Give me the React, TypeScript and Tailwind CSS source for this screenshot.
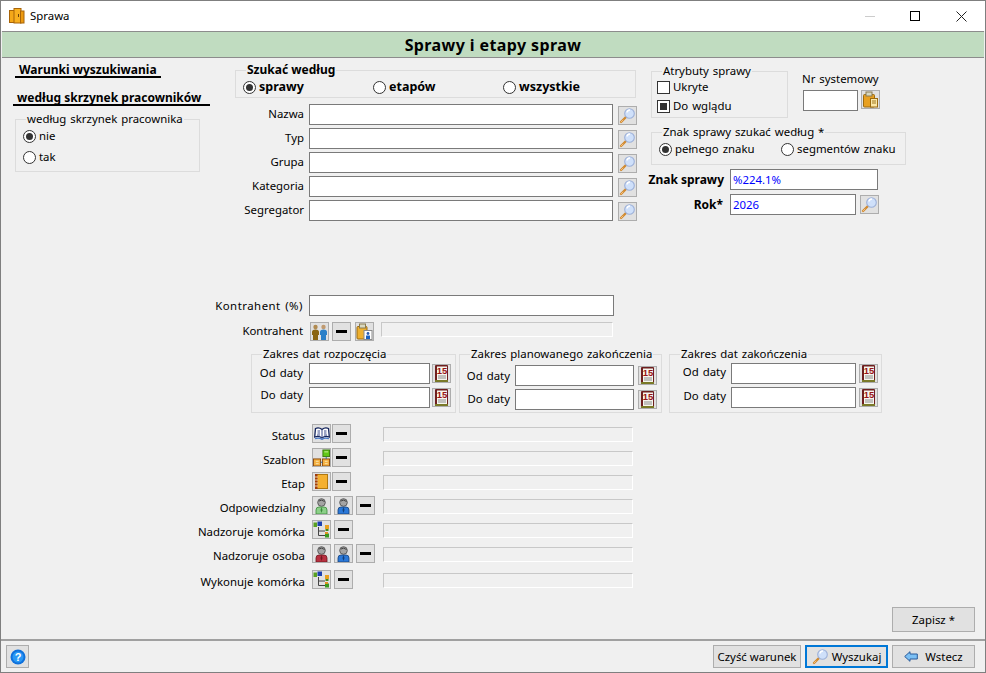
import React from "react";

const Lens = () => (
  <svg width="17" height="17" viewBox="0 0 17 17">
    <path d="M2 15 L7 10" stroke="#d08a30" strokeWidth="2.4" strokeLinecap="round" />
    <path d="M2 15 L4 13" stroke="#f4c080" strokeWidth="1" strokeLinecap="round" />
    <circle cx="10.5" cy="6.5" r="4.8" fill="#cfe0fa" stroke="#9db0d8" strokeWidth="1.1" />
    <path d="M8 5.5 A3 3 0 0 1 11 3" stroke="#fff" strokeWidth="1.5" fill="none" />
  </svg>
);
const Minus = () => <span className="block w-[11px] h-[3px] bg-black" />;
const Clip = () => (
  <svg width="17" height="17" viewBox="0 0 17 17">
    <rect x="1.5" y="3.5" width="11" height="12.5" rx="1" fill="#e8a020" stroke="#9a6a10" />
    <rect x="4" y="1" width="6" height="4" fill="#d8d8c0" stroke="#8a7a50" />
    <rect x="8.5" y="7.5" width="7" height="8.5" fill="#fbe8a8" stroke="#9a6a10" />
    <path d="M10 10h4M10 12h4" stroke="#a07820" />
  </svg>
);
const ClipPeople = () => (
  <svg width="17" height="17" viewBox="0 0 17 17">
    <rect x="1" y="3.5" width="10" height="12.5" rx="1" fill="#eeb030" stroke="#9a6a10" />
    <rect x="3.5" y="1" width="6" height="4" fill="#d8d8c0" stroke="#8a7a50" />
    <rect x="8" y="7.5" width="8" height="9" fill="#fff" stroke="#8a8a8a" />
    <circle cx="12" cy="10.5" r="1.4" fill="#2a5ab0" />
    <path d="M10 16v-3.5h4V16z" fill="#1a60c0" />
  </svg>
);
const People = () => (
  <svg width="17" height="18" viewBox="0 0 17 18">
    <circle cx="4.5" cy="4" r="2.2" fill="#b08a50" />
    <path d="M1 9 Q1 6.5 4.5 6.5 Q8 6.5 8 9 V12 H7 V17 H2 V12 H1 Z" fill="#8a6410" />
    <circle cx="12.5" cy="4" r="2.2" fill="#c09a70" />
    <path d="M9 9 Q9 6.5 12.5 6.5 Q16 6.5 16 9 V12 H15 V17 H10 V12 H9 Z" fill="#2a80c8" />
  </svg>
);
const Calendar = () => (
  <svg width="13" height="17" viewBox="0 0 13 17">
    <rect x="0" y="0" width="13" height="17" rx="1" fill="#6e1f1f" />
    <path d="M0 15h13v2H0z" fill="#7a7a28" />
    <rect x="2" y="1.5" width="10" height="13.5" fill="#f6f6ee" />
    <text x="7" y="8.8" textAnchor="middle" fontSize="9.5" fontWeight="700" fontFamily="Liberation Sans, sans-serif" fill="#981414">15</text>
    <path d="M3 11h8M3 13h8" stroke="#8c8c8c" />
  </svg>
);
const BookOpen = () => (
  <svg width="16" height="13" viewBox="0 0 16 13">
    <path d="M8 2.5 Q5 0 1.5 1.5 L0.7 10 Q5 8.5 8 11 Q11 8.5 15.3 10 L14.5 1.5 Q11 0 8 2.5Z" fill="#fff" stroke="#14245c" strokeWidth="1.3" />
    <path d="M8 2.5V11M3.5 4h2.5M3.5 6h2.5M3 8h3M10 4h2.5M10 6h2.5M10 8h3" stroke="#3a4a8a" />
    <path d="M1 11.8 Q5 10.4 8 12.4 Q11 10.4 15 11.8" stroke="#4a7ac8" fill="none" strokeWidth="1.2" />
  </svg>
);
const Template = () => (
  <svg width="18" height="18" viewBox="0 0 18 18">
    <rect x="10.5" y="0.5" width="7" height="7" fill="#60c818" stroke="#3a7a10" />
    <path d="M12 2.5h4" stroke="#d0f0a0" />
    <rect x="0.5" y="10" width="7.5" height="7.5" fill="#f4b040" stroke="#8a4a10" />
    <rect x="10" y="10" width="7.5" height="7.5" fill="#f4b040" stroke="#8a4a10" />
    <path d="M3 12.5h3M3 15h3M12.5 12.5h3M12.5 15h3" stroke="#fbe4b0" />
    <path d="M8 13.5h2M14 8v2" stroke="#2a6a9a" />
  </svg>
);
const Notebook = () => (
  <svg width="13" height="15" viewBox="0 0 13 15">
    <rect x="1.5" y="0.5" width="11" height="14" fill="#f4b030" stroke="#b07810" />
    <rect x="0" y="0" width="2.5" height="15" fill="#a03c10" />
    <path d="M0 3h3M0 6h3M0 9h3M0 12h3" stroke="#e8d0a0" />
  </svg>
);
const Person = ({ body, dark }: { body: string; dark: string }) => (
  <svg width="13" height="16" viewBox="0 0 13 16">
    <circle cx="6.5" cy="4.5" r="3.8" fill="#a4a4a4" stroke="#5c5c5c" />
    <path d="M4 3 Q6.5 1 9.5 3.5" stroke="#444" fill="none" />
    <path d="M1 16 V12 Q1 9 4 9 H9 Q12 9 12 12 V16 Z" fill={body} stroke={dark} strokeWidth="0.8" />
    <path d="M6.5 9 L5.5 12 L6.5 15 L7.5 12 Z" fill={dark} />
  </svg>
);
const Tree = () => (
  <svg width="17" height="17" viewBox="0 0 17 17">
    <path d="M5.5 6V14.5H12M5.5 10H12" stroke="#444" fill="none" />
    <rect x="0.5" y="1.5" width="3.5" height="4.5" fill="#58a020" />
    <rect x="4.5" y="0.5" width="4.5" height="4.5" fill="#1a40b0" />
    <rect x="12" y="4" width="4" height="4" fill="#e8a020" />
    <rect x="12.5" y="8" width="3" height="2" fill="#3a8a20" />
    <rect x="12" y="12.5" width="4" height="4" fill="#3a9a20" />
    <rect x="12" y="11" width="3" height="2" fill="#e09020" />
  </svg>
);
const ArrowLeft = () => (
  <svg width="14" height="11" viewBox="0 0 14 11">
    <path d="M0.7 5.5 L6 0.7 V3 H13.3 V8 H6 V10.3 Z" fill="#7cc0f4" stroke="#2a5a9a" />
  </svg>
);
const Help = () => (
  <svg width="16" height="16" viewBox="0 0 16 16">
    <circle cx="8" cy="8" r="7.5" fill="#0e70dc" />
    <circle cx="8" cy="8" r="5.5" fill="#2a98f4" />
    <text x="8" y="12" textAnchor="middle" fontSize="11" fontWeight="700" fontFamily="Liberation Sans, sans-serif" fill="#fff">?</text>
  </svg>
);
const AppIcon = () => (
  <svg width="16" height="16" viewBox="0 0 16 16">
    <rect x="0.5" y="2.5" width="5" height="12" fill="#f4a818" stroke="#a86408" />
    <rect x="5" y="0.5" width="7" height="14.5" fill="#f8b020" stroke="#a86408" />
    <rect x="11.5" y="3" width="3.5" height="12" fill="#ec9a10" stroke="#a86408" />
    <path d="M9.5 6v3" stroke="#6a4008" />
  </svg>
);

const IconButton = ({ children, className = "" }: { children: React.ReactNode; className?: string }) => (
  <button type="button" className={`flex items-center justify-center w-[19px] h-[19px] shrink-0 border border-[#adadad] bg-[#e1e1e1] overflow-hidden ${className}`}>
    {children}
  </button>
);
const TextBox = ({ className = "", value = "" }: { className?: string; value?: string }) => (
  <input readOnly value={value} className={`block h-[21px] border border-[#7a7a7a] bg-white px-[2px] text-[#0000ff] outline-none ${className}`} />
);
const Radio = ({ on = false }: { on?: boolean }) => (
  <span className="flex items-center justify-center w-[13px] h-[13px] shrink-0 rounded-full border border-[#333] bg-white">
    {on && <span className="block w-[7px] h-[7px] rounded-full bg-[#333]" />}
  </span>
);
const Check = ({ on = false }: { on?: boolean }) => (
  <span className="flex items-center justify-center w-[13px] h-[13px] shrink-0 border border-[#333] bg-white">
    {on && <span className="block w-[7px] h-[7px] bg-[#333]" />}
  </span>
);
const Group = ({ legend, className = "", bold = false, children }: { legend: string; className?: string; bold?: boolean; children: React.ReactNode }) => (
  <fieldset className={`border border-[#dcdcdc] ${className}`}>
    <legend className={`ml-[10px] px-[1px] h-[14px] leading-[14px] whitespace-nowrap ${bold ? "font-bold text-[12px] [word-spacing:0]" : ""}`}>{legend}</legend>
    {children}
  </fieldset>
);
const SearchRow = ({ label }: { label: string }) => (
  <div className="flex items-start h-[24px]">
    <span className="w-[267px] pr-[5px] text-right leading-[19px]">{label}</span>
    <TextBox className="w-[304px]" />
    <IconButton className="ml-[5px] mt-[2px]"><Lens /></IconButton>
  </div>
);

const DateGroup = ({ legend, className, inputClass, labelClass, pad, btnGap, odShift, doShift }: { legend: string; className: string; inputClass: string; labelClass: string; pad: string; btnGap: string; odShift: string; doShift: string }) => (
  <Group legend={legend} className={className}>
    <div className={`flex flex-col gap-[3px] ${pad}`}>
      <div className="flex items-center">
        <span className={`${labelClass} ${odShift} text-right`}>Od daty</span>
        <TextBox className={inputClass} />
        <IconButton className={btnGap}><Calendar /></IconButton>
      </div>
      <div className="flex items-center">
        <span className={`${labelClass} ${doShift} text-right`}>Do daty</span>
        <TextBox className={inputClass} />
        <IconButton className={btnGap}><Calendar /></IconButton>
      </div>
    </div>
  </Group>
);

const LookupRow = ({ label, h, children }: { label: string; h: string; children: React.ReactNode }) => (
  <div className={`flex items-start ${h}`}>
    <span className="w-[304px] text-right leading-[23px] whitespace-nowrap">{label}</span>
    <div className="flex w-[71px] ml-[7px] gap-[2px]">{children}</div>
    <span className="block mt-[3px] w-[250px] h-[15px] border border-[#c8c8c8] border-b-white border-r-white bg-[#f0f0f0]" />
  </div>
);

export default function App() {
  return (
    <div className="w-[986px] h-[673px] box-border border border-[#7f7f7f] bg-[#f0f0f0] text-black flex flex-col overflow-hidden text-[11.4px] leading-[14px] [word-spacing:1px]" style={{ fontFamily: '"Noto Sans", "Liberation Sans", sans-serif' }}>
      <header className="h-[30px] shrink-0 bg-white flex items-center pl-[8px]">
        <AppIcon />
        <span className="ml-[5px]">Sprawa</span>
        <div className="ml-auto flex items-center">
          <span className="block w-[10px] h-px bg-[#ccc] mr-[35px]" />
          <span className="block w-[10px] h-[10px] border border-black mr-[36px]" />
          <svg width="11" height="11" viewBox="0 0 11 11" className="mr-[18px]"><path d="M0.5 0.5L10.5 10.5M10.5 0.5L0.5 10.5" stroke="#222" fill="none" /></svg>
        </div>
      </header>
      <div className="h-[27px] shrink-0 mx-px border-t border-b border-[#8c8c8c] bg-[#c0dcc0] flex items-center justify-center font-bold text-[16px] tracking-[0.4px] [word-spacing:0]">
        Sprawy i etapy spraw
      </div>

      <main className="flex-1 flex flex-col">
        <div className="flex items-start h-[237px]">
          <section className="w-[234px] shrink-0 pl-[12px] font-normal">
            <div className="w-[142px] ml-[2px] mt-[4px] h-[14px] border-b-2 border-black font-bold text-[12px] [word-spacing:0] pl-[4px] leading-[15px] box-content whitespace-nowrap">Warunki wyszukiwania</div>
            <div className="w-[193px] mt-[12px] h-[14px] border-b-2 border-black font-bold text-[12px] [word-spacing:0] pl-[4px] leading-[15px] box-content whitespace-nowrap">według skrzynek pracowników</div>
            <Group legend="według skrzynek pracownika" className="w-[185px] ml-[2px] mt-[6px] h-[60px]">
              <div className="flex flex-col gap-[7px] pl-[7px] pt-[3px]">
                <label className="flex items-center h-[14px] gap-[3px]"><Radio on />nie</label>
                <label className="flex items-center h-[14px] gap-[3px]"><Radio />tak</label>
              </div>
            </Group>
          </section>

          <section className="w-[416px] shrink-0">
            <Group legend="Szukać według" bold className="w-[401px] h-[35px] mt-[5px]">
              <div className="flex items-center pl-[7px] pt-[2px] h-[18px] font-bold text-[12.5px] [word-spacing:0]">
                <label className="flex items-center gap-[3px] w-[130px]"><Radio on />sprawy</label>
                <label className="flex items-center gap-[3px] w-[130px]"><Radio />etapów</label>
                <label className="flex items-center gap-[3px]"><Radio />wszystkie</label>
              </div>
            </Group>
            <div className="mt-[6px] -ml-[193px]">
              <SearchRow label="Nazwa" />
              <SearchRow label="Typ" />
              <SearchRow label="Grupa" />
              <SearchRow label="Kategoria" />
              <SearchRow label="Segregator" />
            </div>
          </section>

          <section className="w-[300px] shrink-0">
            <div className="flex items-start mt-[6px]">
              <Group legend="Atrybuty sprawy" className="w-[137px] h-[54px]">
                <div className="flex flex-col gap-[5px] pl-[5px] pt-[2px]">
                  <label className="flex items-center gap-[3px]"><Check />Ukryte</label>
                  <label className="flex items-center gap-[3px]"><Check on />Do wglądu</label>
                </div>
              </Group>
              <div className="ml-[14px] mt-[8px]">
                <div className="whitespace-nowrap">Nr systemowy</div>
                <div className="flex mt-[4px] ml-px items-start">
                  <TextBox className="w-[55px]" />
                  <IconButton className="ml-[3px]"><Clip /></IconButton>
                </div>
              </div>
            </div>
            <Group legend="Znak sprawy szukać według *" className="w-[255px] h-[40px] mt-[7px]">
              <div className="flex items-center pl-[7px] pt-[3px]">
                <label className="flex items-center gap-[3px] w-[122px]"><Radio on />pełnego znaku</label>
                <label className="flex items-center gap-[3px] whitespace-nowrap"><Radio />segmentów znaku</label>
              </div>
            </Group>
            <div className="flex items-center mt-[4px]">
              <span className="-ml-[4px] w-[77px] text-right font-bold text-[12px] [word-spacing:0] whitespace-nowrap">Znak sprawy</span>
              <TextBox className="ml-[6px] w-[148px]" value="%224.1%" />
            </div>
            <div className="flex items-center mt-[4px]">
              <span className="w-[72px] text-right font-bold text-[12px]">Rok*</span>
              <TextBox className="ml-[7px] w-[126px]" value="2026" />
              <IconButton className="ml-[4px]"><Lens /></IconButton>
            </div>
          </section>
        </div>

        <div className="flex items-center">
          <span className="w-[302px] text-right whitespace-nowrap tracking-[0.5px]">Kontrahent (%)</span>
          <TextBox className="ml-[6px] w-[305px]" />
        </div>
        <div className="flex items-start mt-[6px]">
          <span className="w-[302px] text-right leading-[18px]">Kontrahent</span>
          <div className="flex ml-[7px] gap-[3px]">
            <IconButton><People /></IconButton>
            <IconButton><Minus /></IconButton>
            <IconButton className="ml-px"><ClipPeople /></IconButton>
          </div>
          <span className="block ml-[7px] w-[232px] h-[15px] border border-[#c8c8c8] border-b-white border-r-white" />
        </div>

        <div className="flex items-start pl-[250px] mt-[6px]">
          <DateGroup legend="Zakres dat rozpoczęcia" className="w-[205px] h-[66px]" pad="pt-[2px]" labelClass="w-[52px] pr-[1px]" inputClass="ml-[5px] w-[121px]" btnGap="ml-[2px]" odShift="pb-[2px]" doShift="pb-[6px]" />
          <DateGroup legend="Zakres planowanego zakończenia" className="ml-[3px] w-[203px] h-[66px]" pad="pt-[4px]" labelClass="w-[50px]" inputClass="ml-[5px] w-[119px]" btnGap="ml-[4px]" odShift="" doShift="pb-[2px]" />
          <DateGroup legend="Zakres dat zakończenia" className="ml-[7px] w-[213px] h-[66px]" pad="pt-[2px]" labelClass="w-[56px]" inputClass="ml-[5px] w-[125px]" btnGap="ml-[3px]" odShift="pb-[4px]" doShift="pb-[4px]" />
        </div>

        <div className="mt-[11px] flex flex-col">
          <LookupRow label="Status" h="h-[24px]"><IconButton><BookOpen /></IconButton><IconButton className="-ml-px"><Minus /></IconButton></LookupRow>
          <LookupRow label="Szablon" h="h-[24px]"><IconButton><Template /></IconButton><IconButton className="-ml-px"><Minus /></IconButton></LookupRow>
          <LookupRow label="Etap" h="h-[24px]"><IconButton><Notebook /></IconButton><IconButton className="-ml-px"><Minus /></IconButton></LookupRow>
          <LookupRow label="Odpowiedzialny" h="h-[24px]"><IconButton><Person body="#8cd088" dark="#3a8a3a" /></IconButton><IconButton className="ml-px"><Person body="#2a78d8" dark="#14407a" /></IconButton><IconButton className="ml-px"><Minus /></IconButton></LookupRow>
          <LookupRow label="Nadzoruje komórka" h="h-[24px]"><IconButton><Tree /></IconButton><IconButton className="ml-px"><Minus /></IconButton></LookupRow>
          <LookupRow label="Nadzoruje osoba" h="h-[26px]"><IconButton><Person body="#b83040" dark="#701820" /></IconButton><IconButton className="ml-px"><Person body="#2a78d8" dark="#14407a" /></IconButton><IconButton className="ml-px"><Minus /></IconButton></LookupRow>
          <LookupRow label="Wykonuje komórka" h="h-[24px]"><IconButton><Tree /></IconButton><IconButton className="ml-px"><Minus /></IconButton></LookupRow>
        </div>

        <div className="mt-auto flex justify-end pr-[10px] pb-[7px]">
          <button type="button" className="w-[83px] h-[25px] border border-[#adadad] bg-[#e1e1e1]">Zapisz *</button>
        </div>
      </main>

      <footer className="h-[33px] shrink-0 border-t-2 border-[#a0a0a0] flex items-start pt-[4px] pl-[5px] pr-[10px]">
        <button type="button" className="w-[23px] h-[23px] border border-[#adadad] bg-[#e1e1e1] flex items-center justify-center"><Help /></button>
        <div className="ml-auto flex gap-[4px]">
          <button type="button" className="w-[88px] h-[23px] border border-[#adadad] bg-[#e1e1e1] whitespace-nowrap">Czyść warunek</button>
          <button type="button" className="w-[83px] h-[23px] border-2 border-[#0078d7] bg-[#e1e1e1] flex items-center justify-center gap-[3px]"><Lens />Wyszukaj</button>
          <button type="button" className="w-[83px] h-[23px] border border-[#adadad] bg-[#e1e1e1] flex items-center justify-center gap-[7px]"><ArrowLeft />Wstecz</button>
        </div>
      </footer>
    </div>
  );
}
